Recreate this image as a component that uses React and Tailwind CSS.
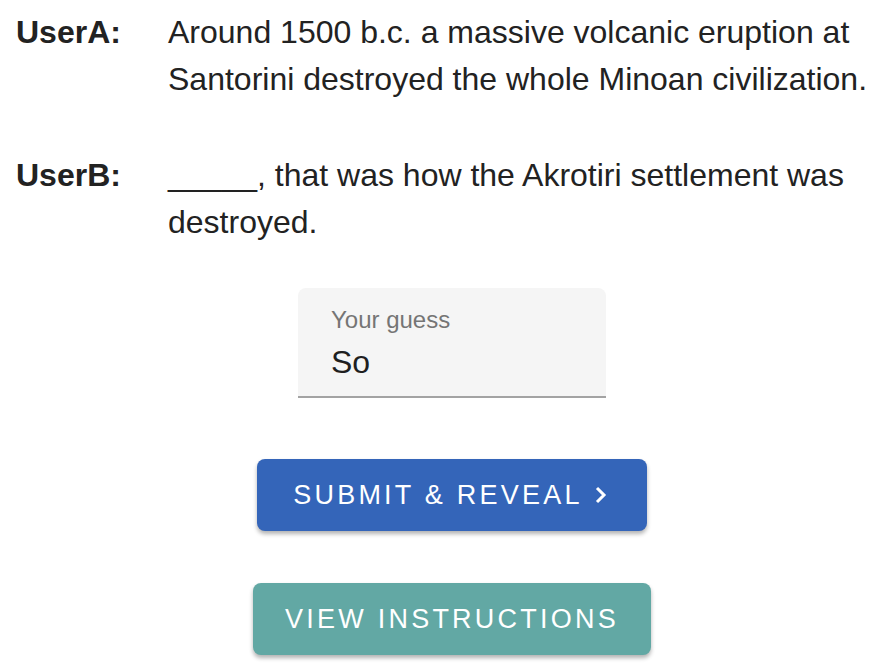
export default function App() {
  return (
    <div className="w-[878px] h-[672px] bg-white text-[#222] overflow-hidden" style={{ fontFamily: '"Liberation Sans", Arial, sans-serif' }}>
      <div className="pt-[9px] pl-[16px] flex flex-col gap-[49px]">
        <div className="flex text-[32px] leading-[47px]">
          <div className="w-[152px] shrink-0 font-bold">UserA:</div>
          <div className="w-[710px]">Around 1500 b.c. a massive volcanic eruption at Santorini destroyed the whole Minoan civilization.</div>
        </div>
        <div className="flex text-[32px] leading-[47px]">
          <div className="w-[152px] shrink-0 font-bold">UserB:</div>
          <div className="w-[690px]">_____, that was how the Akrotiri settlement was destroyed.</div>
        </div>
      </div>
      <div className="flex flex-col items-center mt-[42px]">
        <div className="w-[308px] h-[110px] bg-[#f5f5f5] rounded-t-[8px] border-b-2 border-[#a3a3a3] pl-[33px] pt-[17px] ml-[26px]">
          <div className="text-[24px] leading-[30px] text-[#757575]">Your guess</div>
          <div className="text-[32px] leading-[38px] mt-[8px] text-[#1f1f1f]">So</div>
        </div>
        <button className="mt-[61px] w-[390px] h-[72px] rounded-[8px] bg-[#3465b9] text-white text-[27px] tracking-[0.12em] uppercase shadow-[0_3px_4px_rgba(0,0,0,0.3)] flex items-center justify-center ml-[26px]">
          SUBMIT &amp; REVEAL
          <svg width="20" height="24" viewBox="0 0 20 24" className="ml-[8px]"><path d="M6 5 L13 12 L6 19" stroke="white" strokeWidth="3" fill="none" /></svg>
        </button>
        <button className="mt-[52px] w-[398px] h-[72px] rounded-[8px] bg-[#62a8a4] text-white text-[27px] tracking-[0.12em] uppercase shadow-[0_3px_4px_rgba(0,0,0,0.3)] flex items-center justify-center ml-[26px]">
          VIEW INSTRUCTIONS
        </button>
      </div>
    </div>
  );
}
